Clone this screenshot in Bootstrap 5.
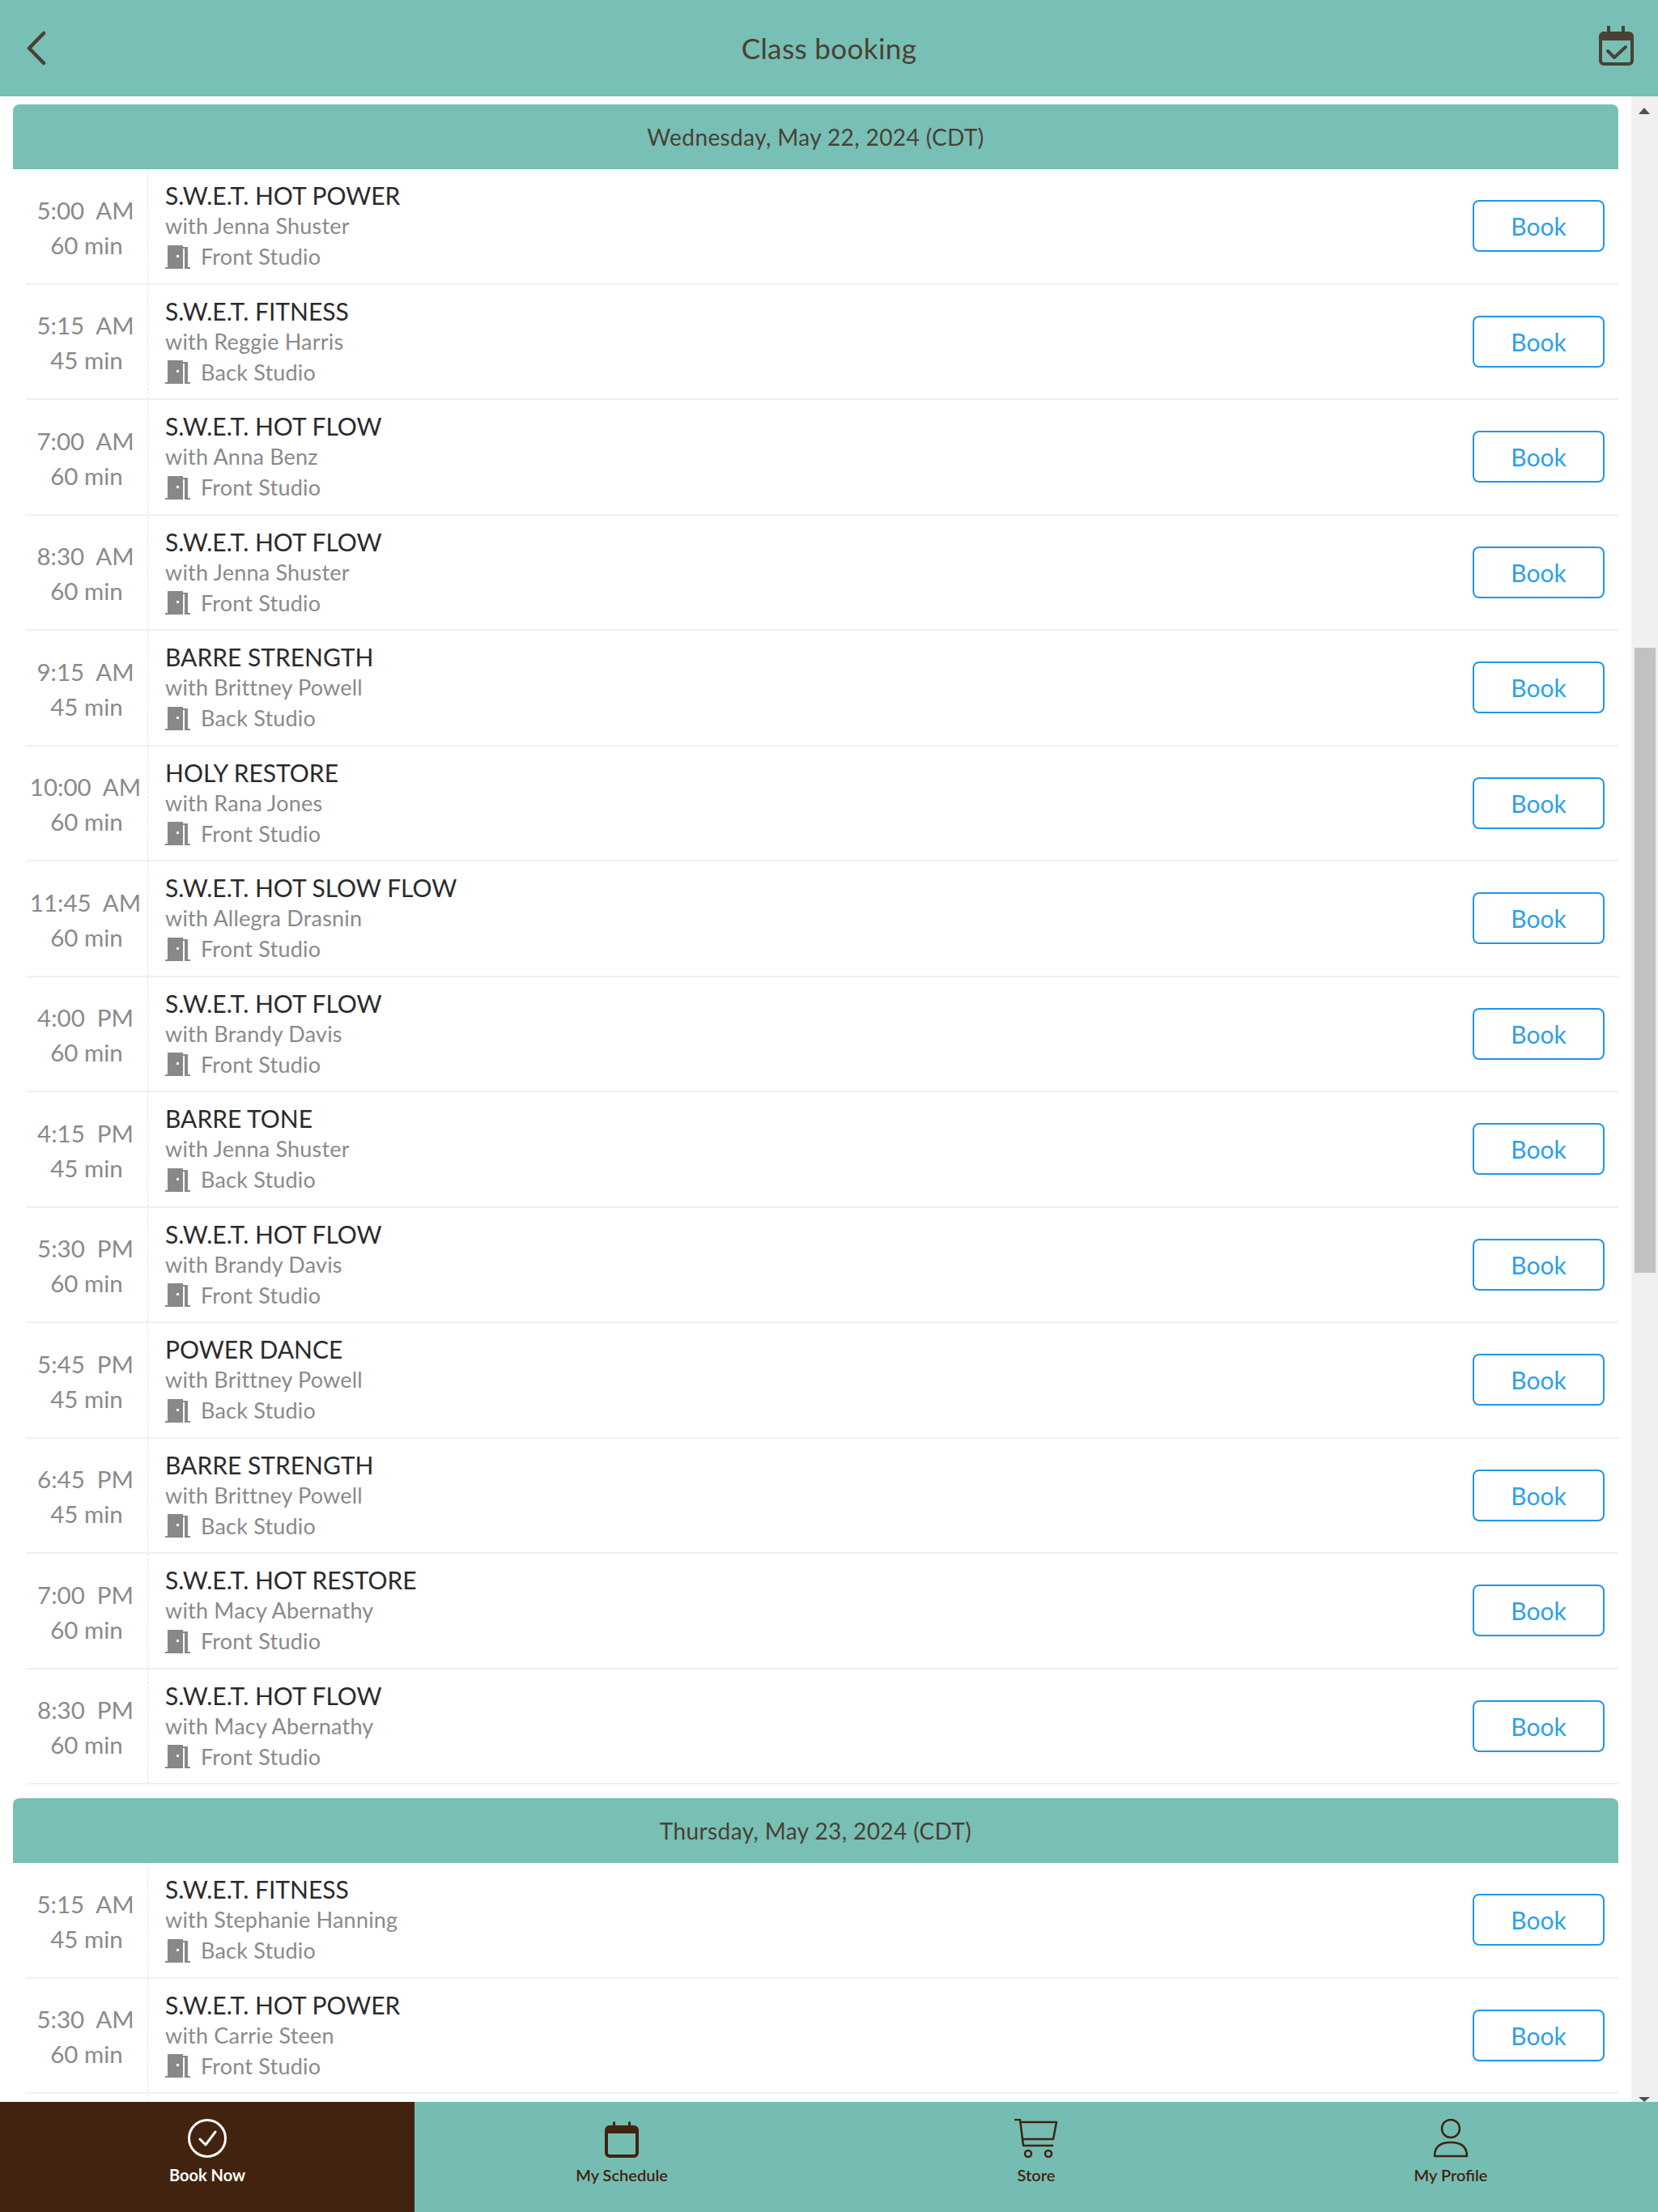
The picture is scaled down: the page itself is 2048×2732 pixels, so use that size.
<!DOCTYPE html>
<html lang="en">
<head>
  <meta charset="UTF-8">
  <title>Class booking</title>
  <link href="https://cdn.jsdelivr.net/npm/bootstrap@5.3.3/dist/css/bootstrap.min.css" rel="stylesheet">
  <style>
    html, body { height: 100%; overflow: hidden; }
    body { font-family: "Lato", "Liberation Sans", sans-serif; background: #fff; }
    .app-shell { height: 2732px; }
    .top-bar { height: 119px; background: #78bfb5; color: #4a4034; flex: none; }
    .top-title { font-size: 35px; line-height: 1; letter-spacing: .4px; }
    .back-btn { left: 32px; top: 38px; }
    .cal-btn { right: 30px; top: 32px; }
    .main-area { min-height: 0; }
    .class-list { padding: 10px 16px 0 16px; width: 2015px; overflow: hidden; }
    .date-bar { height: 80px; background: #78bfb5; color: #4a4034; font-size: 28px; border-radius: 8px 8px 0 0; letter-spacing: .4px; }
    .day-block { margin-bottom: 17px; }
    .class-row { height: 142.5px; margin-left: 16px; border-bottom: 2px solid #edf1f5; }
    .time-col { width: 151px; height: 100%; border-right: 1px dashed #e6e6e6; color: #8a8a8a; font-size: 29.5px; line-height: 43px; white-space: pre; text-align: center; flex: none; padding-top: 3px; }
    .time-start { padding-right: 3px; }
    .info-col { padding-left: 21px; line-height: 38px; }
    .class-name { font-size: 30px; color: #2b2b2b; }
    .class-sub { font-size: 27px; color: #8a8a8a; letter-spacing: .2px; }
    .door-icon { width: 31px; height: 29px; margin-right: 13px; flex: none; }
    .book-btn { width: 163px; height: 64px; margin-right: 17px; font-size: 30px; line-height: 1; --bs-btn-color: #2f9fea; --bs-btn-border-color: #2196e8; --bs-btn-border-width: 2px; --bs-btn-border-radius: 8px; --bs-btn-hover-bg: #2196e8; --bs-btn-hover-border-color: #2196e8; }
    .scroll-track { width: 33px; background: #f0f0f0; flex: none; }
    .scroll-thumb { width: 26px; height: 772px; background: #c1c1c1; margin: 681px auto 0 auto; }
    .arrow-up { top: 14px; left: 9px; border-left: 7px solid transparent; border-right: 7px solid transparent; border-bottom: 8px solid #505050; }
    .arrow-down { bottom: 0; left: 9px; border-left: 7px solid transparent; border-right: 7px solid transparent; border-top: 6px solid #505050; }
    .tab-bar { height: 136px; flex: none; background: #75bdb3; }
    .tab-item { color: #41230f; font-size: 20px; font-weight: 600; height: 100%; padding-top: 21px; }
    .tab-item.on { background: #41230f; color: #fff; font-weight: 700; }
    .tab-icon { height: 48px; margin-bottom: 6px; }
  </style>
</head>
<body>
<div class="app-shell d-flex flex-column">
  <header class="top-bar position-relative d-flex align-items-center justify-content-center">
    <svg class="back-btn position-absolute" width="26" height="44" viewBox="0 0 26 44" fill="none" stroke="#4a4034" stroke-width="4.5" stroke-linecap="round" stroke-linejoin="round"><path d="M22 3 L4 21.5 L22 40"/></svg>
    <span class="top-title">Class booking</span>
    <svg class="cal-btn position-absolute" width="43" height="50" viewBox="0 0 43 50" fill="#4a4034"><path d="M10 1a2 2 0 0 1 4 0v6h14V1a2 2 0 0 1 4 0v6h5a6 6 0 0 1 6 6v30a6 6 0 0 1-6 6H6a6 6 0 0 1-6-6V13a6 6 0 0 1 6-6h4zM4 18v25a2 2 0 0 0 2 2h31a2 2 0 0 0 2-2V18z"/><path d="M11 31l8 8 14-13" fill="none" stroke="#4a4034" stroke-width="4" stroke-linecap="round" stroke-linejoin="round"/></svg>
  </header>

  <div class="main-area flex-grow-1 d-flex">
    <div class="class-list" id="list"></div>
    <div class="scroll-track position-relative">
      <div class="arrow-up position-absolute"></div>
      <div class="scroll-thumb"></div>
      <div class="arrow-down position-absolute"></div>
    </div>
  </div>

  <nav class="tab-bar d-flex">
    <div class="tab-item on w-25 d-flex flex-column align-items-center">
      <svg class="tab-icon" width="50" height="48" viewBox="0 0 50 48" fill="none" stroke="#fff" stroke-width="3"><circle cx="25" cy="24" r="22.5"/><path d="M16 25l7 7 12-16" stroke-linecap="round" stroke-linejoin="round"/></svg>
      <span>Book Now</span>
    </div>
    <div class="tab-item w-25 d-flex flex-column align-items-center">
      <svg class="tab-icon" width="42" height="48" viewBox="0 0 42 48" fill="#41230f"><path d="M10 4a2 2 0 0 1 3 0v4h16V4a2 2 0 0 1 3 0v4h4a6 6 0 0 1 6 6v28a6 6 0 0 1-6 6H6a6 6 0 0 1-6-6V14a6 6 0 0 1 6-6h4zM4 18v24a2 2 0 0 0 2 2h30a2 2 0 0 0 2-2V18z"/></svg>
      <span>My Schedule</span>
    </div>
    <div class="tab-item w-25 d-flex flex-column align-items-center">
      <svg class="tab-icon" width="54" height="48" viewBox="0 0 54 48" fill="none" stroke="#41230f" stroke-width="2.5" stroke-linecap="round" stroke-linejoin="round"><path d="M1 1h6l4 32h36"/><path d="M8 4h44l-4 21H10"/><ellipse cx="17" cy="43" rx="4" ry="4"/><ellipse cx="42" cy="43" rx="4" ry="4"/></svg>
      <span>Store</span>
    </div>
    <div class="tab-item w-25 d-flex flex-column align-items-center">
      <svg class="tab-icon" width="44" height="48" viewBox="0 0 44 48" fill="none" stroke="#41230f" stroke-width="2.5" stroke-linejoin="round"><ellipse cx="22" cy="12" rx="11" ry="11"/><path d="M2 46c0-12 8-17 20-17s20 5 20 17z"/></svg>
      <span>My Profile</span>
    </div>
  </nav>
</div>

<script src="https://cdn.jsdelivr.net/npm/bootstrap@5.3.3/dist/js/bootstrap.bundle.min.js"></script>
<script>
const days = [
  { date: "Wednesday, May 22, 2024 (CDT)", rows: [
    ["5:00  AM", "60 min", "S.W.E.T. HOT POWER", "Jenna Shuster", "Front Studio"],
    ["5:15  AM", "45 min", "S.W.E.T. FITNESS", "Reggie Harris", "Back Studio"],
    ["7:00  AM", "60 min", "S.W.E.T. HOT FLOW", "Anna Benz", "Front Studio"],
    ["8:30  AM", "60 min", "S.W.E.T. HOT FLOW", "Jenna Shuster", "Front Studio"],
    ["9:15  AM", "45 min", "BARRE STRENGTH", "Brittney Powell", "Back Studio"],
    ["10:00  AM", "60 min", "HOLY RESTORE", "Rana Jones", "Front Studio"],
    ["11:45  AM", "60 min", "S.W.E.T. HOT SLOW FLOW", "Allegra Drasnin", "Front Studio"],
    ["4:00  PM", "60 min", "S.W.E.T. HOT FLOW", "Brandy Davis", "Front Studio"],
    ["4:15  PM", "45 min", "BARRE TONE", "Jenna Shuster", "Back Studio"],
    ["5:30  PM", "60 min", "S.W.E.T. HOT FLOW", "Brandy Davis", "Front Studio"],
    ["5:45  PM", "45 min", "POWER DANCE", "Brittney Powell", "Back Studio"],
    ["6:45  PM", "45 min", "BARRE STRENGTH", "Brittney Powell", "Back Studio"],
    ["7:00  PM", "60 min", "S.W.E.T. HOT RESTORE", "Macy Abernathy", "Front Studio"],
    ["8:30  PM", "60 min", "S.W.E.T. HOT FLOW", "Macy Abernathy", "Front Studio"]
  ]},
  { date: "Thursday, May 23, 2024 (CDT)", rows: [
    ["5:15  AM", "45 min", "S.W.E.T. FITNESS", "Stephanie Hanning", "Back Studio"],
    ["5:30  AM", "60 min", "S.W.E.T. HOT POWER", "Carrie Steen", "Front Studio"],
    null
  ]}
];

const door = '<svg class="door-icon" viewBox="0 0 31 29" fill="#888"><path d="M3 0h19v2h6v25h3v2h-7V4h-2v25H0v-2h3z"/><rect x="14" y="12" width="3" height="3" fill="#fff"/></svg>';

function rowHtml(r) {
  // last row is cut off by the tab bar, only its divider shows
  if (!r) return '<div class="class-row d-flex"><div class="time-col"></div></div>';
  return `<div class="class-row d-flex align-items-center">
    <div class="time-col d-flex flex-column justify-content-center"><div class="time-start">${r[0]}</div><div>${r[1]}</div></div>
    <div class="info-col flex-grow-1">
      <div class="class-name">${r[2]}</div>
      <div class="class-sub">with ${r[3]}</div>
      <div class="class-sub d-flex align-items-center">${door}${r[4]}</div>
    </div>
    <button type="button" class="btn btn-outline-primary book-btn">Book</button>
  </div>`;
}

document.getElementById("list").innerHTML = days.map(d =>
  `<section class="day-block">
    <div class="date-bar d-flex align-items-center justify-content-center">${d.date}</div>
    ${d.rows.map(rowHtml).join("")}
  </section>`).join("");
</script>
</body>
</html>
